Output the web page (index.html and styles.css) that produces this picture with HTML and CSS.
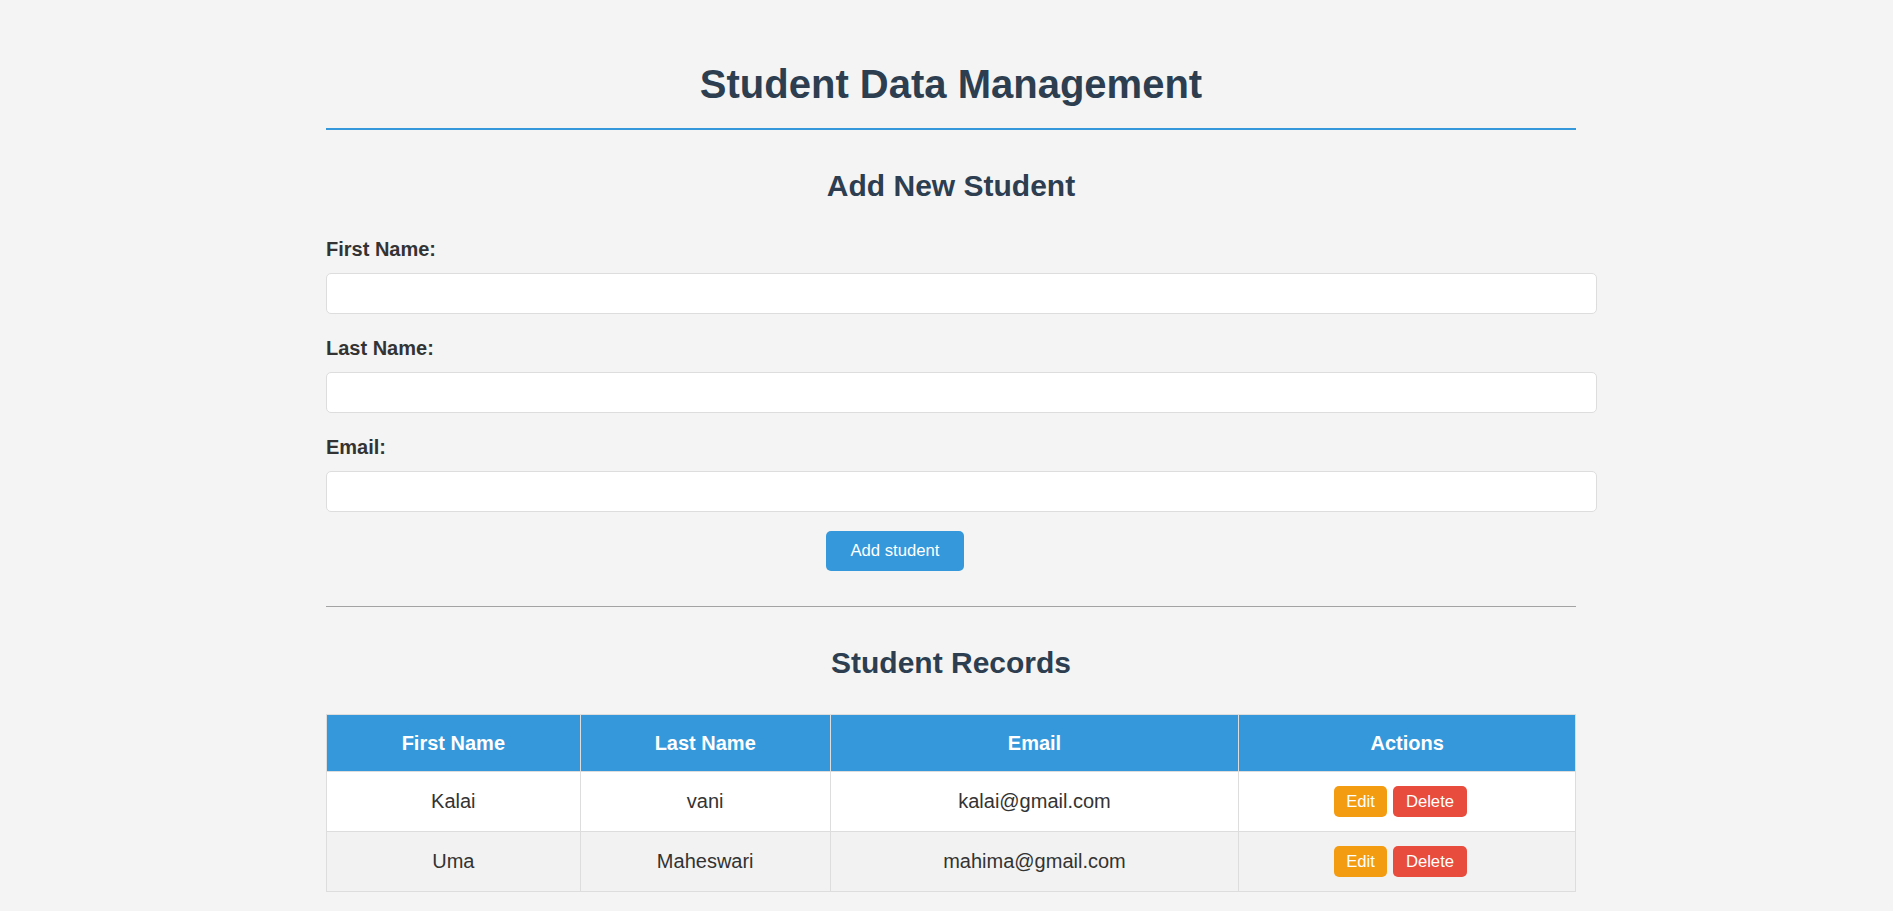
FILE: index.html
```html
<!DOCTYPE html>
<html lang="en">
<head>
<meta charset="utf-8">
<title>Student Data Management</title>
<link rel="stylesheet" href="styles.css">
</head>
<body>
<div class="container">
  <h1 class="title">Student Data Management</h1>
  <h2 class="section-title form-title">Add New Student</h2>
  <form class="student-form">
    <div class="fields">
      <div class="field">
        <label class="field-label" for="first">First Name:</label>
        <input class="field-input" id="first" type="text">
      </div>
      <div class="field">
        <label class="field-label" for="last">Last Name:</label>
        <input class="field-input" id="last" type="text">
      </div>
      <div class="field">
        <label class="field-label" for="email">Email:</label>
        <input class="field-input" id="email" type="email">
      </div>
    </div>
    <div class="actions">
      <button class="btn btn-primary" type="button">Add student</button>
    </div>
  </form>
  <hr class="divider">
  <h2 class="section-title records-title">Student Records</h2>
  <table class="records">
    <thead>
      <tr>
        <th class="col-first">First Name</th>
        <th class="col-last">Last Name</th>
        <th class="col-email">Email</th>
        <th class="col-actions">Actions</th>
      </tr>
    </thead>
    <tbody>
      <tr>
        <td>Kalai</td>
        <td>vani</td>
        <td>kalai@gmail.com</td>
        <td><div class="action-group"><button class="btn btn-small btn-edit" type="button">Edit</button><button class="btn btn-small btn-delete" type="button">Delete</button></div></td>
      </tr>
      <tr>
        <td>Uma</td>
        <td>Maheswari</td>
        <td>mahima@gmail.com</td>
        <td><div class="action-group"><button class="btn btn-small btn-edit" type="button">Edit</button><button class="btn btn-small btn-delete" type="button">Delete</button></div></td>
      </tr>
    </tbody>
  </table>
</div>
</body>
</html>
```

FILE: styles.css
```css
html, body {
  margin: 0;
  padding: 0;
}

body {
  background: #f4f4f4;
  font-family: "Liberation Sans", Arial, sans-serif;
  font-size: 20px;
  color: #333;
  padding-left: 9px;
  overflow: hidden;
}

.container {
  width: 1250px;
  margin: 0 auto;
  padding-top: 35px;
}

.title {
  margin: 26px 0 0;
  font-size: 40px;
  line-height: 46px;
  font-weight: bold;
  color: #2c3e50;
  text-align: center;
  padding-bottom: 21px;
  border-bottom: 2px solid #3498db;
}

.section-title {
  font-size: 30px;
  line-height: 34px;
  font-weight: bold;
  color: #2c3e50;
  text-align: center;
}

.form-title {
  margin: 39px 0 35px;
}

.fields {
  display: flex;
  flex-direction: column;
  gap: 23px;
}

.field-label {
  display: block;
  font-weight: bold;
  font-size: 20px;
  line-height: 23px;
  color: #333;
  margin-bottom: 12px;
}

.field-input {
  display: block;
  width: 1271px;
  height: 41px;
  box-sizing: border-box;
  padding: 10px;
  border: 1px solid #ddd;
  border-radius: 5px;
  background: #fff;
  font-family: "Liberation Sans", Arial, sans-serif;
  font-size: 16.67px;
}

.actions {
  margin-top: 19px;
}

.btn {
  font-family: "Liberation Sans", Arial, sans-serif;
  font-size: 16.67px;
  color: #fff;
  border: none;
  border-radius: 5px;
  cursor: pointer;
}

.btn-primary {
  margin-left: 500px;
  background: #3498db;
  height: 40px;
  padding: 0 24.5px 2px;
  line-height: 19px;
}

.divider {
  margin: 35px 0 0;
  border: none;
  border-top: 1px solid #a3a3a3;
  height: 0;
}

.records-title {
  margin: 39px 0 34px;
}

.records {
  width: 1250px;
  border-collapse: collapse;
  background: #fff;
}

.records th,
.records td {
  border: 1px solid #ddd;
  text-align: center;
  vertical-align: middle;
  padding: 0 15px;
}

.records th {
  background: #3498db;
  color: #fff;
  font-weight: bold;
  font-size: 20px;
  height: 56px;
}

.records td {
  font-size: 20px;
  color: #333;
  height: 59px;
}

.records tbody tr:nth-child(even) td {
  background: #f2f2f2;
}

.col-first { width: 224px; }
.col-last { width: 220px; }
.col-email { width: 379px; }
.col-actions { width: 307px; }

.action-group {
  display: inline-flex;
  gap: 6px;
  margin-right: 14px;
  vertical-align: middle;
}

.btn-small {
  padding: 6px 12.5px;
  line-height: 19.5px;
}

.btn-edit {
  background: #f39c12;
}

.btn-delete {
  background: #e74c3c;
}
```
